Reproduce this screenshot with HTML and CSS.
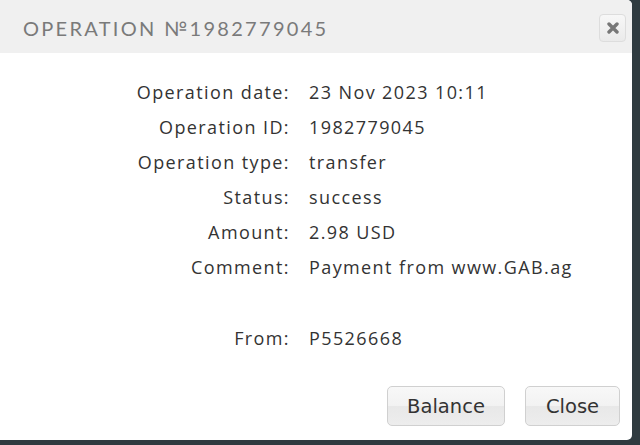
FILE: index.html
```html
<!DOCTYPE html>
<html>
<head>
<meta charset="utf-8">
<link rel="stylesheet" href="styles.css">
</head>
<body>
<div class="dialog">
  <div class="header">
    <div class="title">OPERATION №1982779045</div>
    <button class="x-btn" aria-label="close">
      <svg width="12" height="12" viewBox="0 0 12 12"><path d="M2 2 L10 10 M10 2 L2 10" stroke="#777" stroke-width="3.4" stroke-linecap="round"/></svg>
    </button>
  </div>
  <div class="body">
    <div class="grid">
      <div class="lbl">Operation date:</div><div class="val">23 Nov 2023 10:11</div>
      <div class="lbl">Operation ID:</div><div class="val">1982779045</div>
      <div class="lbl">Operation type:</div><div class="val">transfer</div>
      <div class="lbl">Status:</div><div class="val">success</div>
      <div class="lbl">Amount:</div><div class="val">2.98 USD</div>
      <div class="lbl">Comment:</div><div class="val">Payment from www.GAB.ag</div>
      <div class="lbl gap"></div><div class="val gap"></div>
      <div class="lbl">From:</div><div class="val">P5526668</div>
    </div>
  </div>
  <div class="footer">
    <button class="btn balance">Balance</button>
    <button class="btn close">Close</button>
  </div>
</div>
</body>
</html>
```
FILE: styles.css
```css
html, body {
  margin: 0;
  padding: 0;
  background: #2f3b40;
  width: 640px;
  height: 445px;
  overflow: hidden;
}
.dialog {
  width: 632px;
  height: 440px;
  background: #fff;
  border-radius: 0 5px 5px 0;
  display: flex;
  flex-direction: column;
  overflow: hidden;
}
.header {
  height: 53px;
  background: #f0f0f0;
  display: flex;
  align-items: center;
  justify-content: space-between;
  padding: 0 6px 0 23px;
  flex-shrink: 0;
}
.title {
  font-family: "Lato", "DejaVu Sans", sans-serif;
  font-size: 20px;
  letter-spacing: 2.3px;
  color: #7a7a7a;
  margin-top: 2px;
}
.x-btn {
  width: 27px;
  height: 28px;
  border: 1px solid #ddd;
  border-radius: 4px;
  background: linear-gradient(#f7f7f7, #eaeaea);
  display: flex;
  align-items: center;
  justify-content: center;
  padding: 0;
  margin-top: 2px;
}
.body {
  flex: 1;
  padding-top: 22px;
}
.grid {
  display: grid;
  grid-template-columns: 290px auto;
  column-gap: 19px;
  font-family: "Open Sans", sans-serif;
  font-size: 18px;
  letter-spacing: 1.4px;
  color: #333;
}
.lbl, .val {
  height: 35px;
  line-height: 35px;
  white-space: nowrap;
}
.lbl { text-align: right; }
.gap { height: 36px; }
.footer {
  display: flex;
  justify-content: flex-end;
  gap: 20px;
  padding: 0 12px 14px 0;
}
.btn {
  height: 40px;
  border: 1px solid #d0d0d0;
  border-radius: 5px;
  background: linear-gradient(#f8f8f8 0%, #f2f2f2 50%, #e8e8e8 51%, #ededed 100%);
  font-family: "DejaVu Sans", sans-serif;
  font-size: 19.5px;
  color: #333;
  padding: 0;
}
.balance { width: 118px; }
.close { width: 95px; }
```
